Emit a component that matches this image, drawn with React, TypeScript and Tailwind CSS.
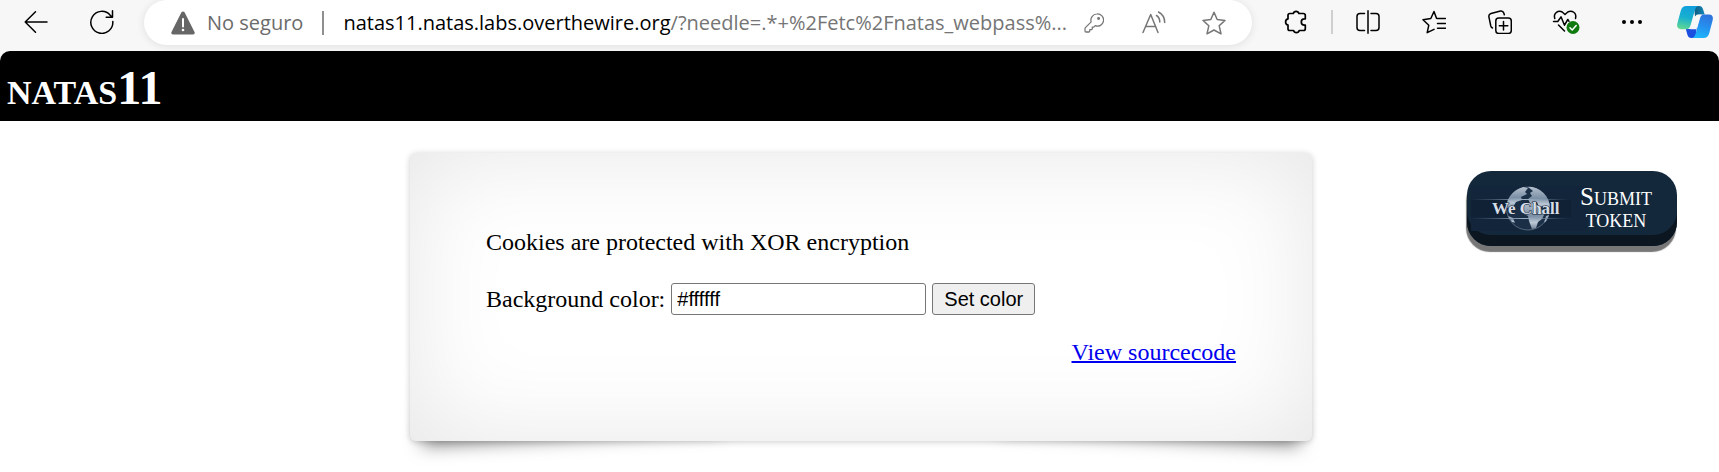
import type { ReactNode } from "react";

type IconProps = { children: ReactNode; className?: string; width?: number };

function Icon({ children, className = "size-6", width = 1.5 }: IconProps) {
  return (
    <svg
      viewBox="0 0 24 24"
      className={className}
      fill="none"
      stroke="currentColor"
      strokeWidth={width}
      strokeLinecap="round"
      strokeLinejoin="round"
      aria-hidden="true"
    >
      {children}
    </svg>
  );
}

function ToolButton({ label, children }: { label: string; children: ReactNode }) {
  return (
    <button type="button" aria-label={label} className="flex h-11 w-12 shrink-0 items-center justify-center">
      {children}
    </button>
  );
}

function CopilotLogo() {
  return (
    <svg viewBox="0 0 36 32" className="h-8 w-9" aria-hidden="true">
      <defs>
        <linearGradient id="cp-left" x1="0.500" y1="0" x2="0.300" y2="1">
          <stop offset="0" stopColor="#109fdd" />
          <stop offset="0.500" stopColor="#18b0cf" />
          <stop offset="1" stopColor="#5fd893" />
        </linearGradient>
        <linearGradient id="cp-right" x1="0.700" y1="0" x2="0.400" y2="1">
          <stop offset="0" stopColor="#2f72dc" />
          <stop offset="0.500" stopColor="#2590ef" />
          <stop offset="1" stopColor="#1fb6fb" />
        </linearGradient>
        <linearGradient id="cp-top" x1="0" y1="0.500" x2="1" y2="0.500">
          <stop offset="0" stopColor="#0e5b7c" />
          <stop offset="1" stopColor="#1286b8" />
        </linearGradient>
      </defs>
      <path d="M17 0h5c2.500 0 3.600 1.500 4.300 4l1.400 4.500H23c-2.500 0-4 .5-5 2z" fill="url(#cp-top)" />
      <path d="M19 32h-4.500c-2.700 0-3.600-1.500-4.300-4L8.800 23h3.700c2.500 0 3.800-.5 4.800-2.500l2.200 1z" fill="#1c4fe0" />
      <path d="M9.500 0H22c-2.300 0-3.400 1.800-4.200 4.500L13.600 19c-.9 3-1.900 4.200-4.600 4.200H4c-3.500 0-4.500-2.700-3.600-6L3.700 5C4.700 1.500 6.200 0 9.500 0z" fill="url(#cp-left)" />
      <path d="M27 8.500h5c3.500 0 4.500 2.700 3.600 6L32.300 27c-1 3.500-2.500 5-5.800 5H14.500c2.300 0 3.400-1.800 4.200-4.500L22.800 13c.8-3 1.700-4.500 4.200-4.500z" fill="url(#cp-right)" />
      <path d="M19.500 8.800h5c-1.200.9-1.700 2.300-2.200 4.200l-3 10.200h-6c1.300-.8 1.900-2.200 2.400-4.200z" fill="#f7f7f7" />
    </svg>
  );
}

function BrowserBar() {
  return (
    <header className="flex h-[51px] items-start overflow-hidden bg-[#f7f7f7] pr-1.5 pl-3 font-['Open_Sans','Noto_Sans',sans-serif] text-black">
      <div className="flex gap-[18px] pr-[18px]">
        <ToolButton label="Atrás">
          <Icon>
            <path d="M23 12H1.200M11.500 1.700L1.200 12l10.300 10.300" />
          </Icon>
        </ToolButton>
        <ToolButton label="Actualizar">
          <Icon>
            <path d="M22.800 11.500A11 11 0 1 1 20.200 5.200L22.300 7.200M22.500 .8v6.500h-6.300" />
          </Icon>
        </ToolButton>
      </div>

      <div className="flex h-[45px] min-w-0 flex-1 items-center rounded-full bg-white pr-3.5 pl-[27px] shadow-[0_1px_8px_rgba(0,0,0,0.1)]">
        <svg viewBox="0 0 24 24" className="size-6 shrink-0" aria-hidden="true">
          <path d="M10.300 1.500a2 2 0 0 1 3.400 0L23.500 21a1.700 1.700 0 0 1-1.500 2.500H2A1.700 1.700 0 0 1 .5 21z" fill="#666" />
          <path d="M12 8v7.500" stroke="#fff" strokeWidth="2" strokeLinecap="round" />
          <circle cx="12" cy="19" r="1.300" fill="#fff" />
        </svg>
        <span className="ml-3 shrink-0 text-[20px] leading-6 text-[#6b6b6b]">No seguro</span>
        <span className="mx-[19px] h-6 w-0.5 shrink-0 bg-[#8f8f8f]" />
        <span className="min-w-0 flex-1 whitespace-nowrap text-[20px] leading-6 text-[#757575]">
          <span className="text-black">natas11.natas.labs.overthewire.org</span>
          /?needle=.*+%2Fetc%2Fnatas_webpass%...
        </span>
        <div className="flex gap-3 text-[#767676]">
          <ToolButton label="Contraseñas">
            <Icon className="size-5">
              <path d="M15.500 1.200a7.300 7.300 0 0 0-6.900 9.500L1.700 17.600a2 2 0 0 0-.5 1.300v2.600c0 .8.500 1.300 1.300 1.300h3.200c.7 0 1.200-.5 1.200-1.200v-1.500h1.800c.7 0 1.200-.5 1.200-1.200v-2h1.800l1.700-1.700a7.300 7.300 0 1 0 2.100-14z" />
              <circle cx="17.500" cy="6.500" r="1" fill="currentColor" />
            </Icon>
          </ToolButton>
          <ToolButton label="Leer en voz alta">
            <Icon>
              <path d="M1 21.500L8.700 3.500l7.300 18M3.800 15.500h10M14.500 4.500c2 1.300 3.300 3.800 3.300 6.500M16.500 1c3.800 2 6.200 6 6.200 10.500" />
            </Icon>
          </ToolButton>
          <ToolButton label="Agregar a favoritos">
            <Icon>
              <path d="M12 1.200l3.200 7.300 7.800.9-5.800 5.400 1.800 8L12 19l-7 3.800 1.800-8L1 9.400l7.800-.9z" />
            </Icon>
          </ToolButton>
        </div>
      </div>

      <div className="flex shrink-0 items-center gap-[18px] pl-5">
        <div className="flex items-center gap-[11px]">
          <ToolButton label="Extensiones">
            <Icon width={1.7}>
              <path d="M5.800 3.500h3.500a2.900 2.900 0 0 1 5.600 0h4.600a1.800 1.800 0 0 1 1.800 1.800v3.500h-.8a3.200 3.200 0 0 0 0 6.400h.8v3.500a1.800 1.800 0 0 1-1.800 1.800h-4.300a2.900 2.900 0 0 1-5.600 0H5.800A1.800 1.800 0 0 1 4 18.700v-3.600a3.200 3.200 0 0 1 0-6.200V5.300a1.800 1.800 0 0 1 1.800-1.800z" />
            </Icon>
          </ToolButton>
          <span className="h-6 w-0.5 bg-[#cfcfcf]" />
          <ToolButton label="Pantalla dividida">
            <Icon>
              <path d="M12 .8v22.400M8.500 3.500H4a3 3 0 0 0-3 3v11a3 3 0 0 0 3 3h4.500M15 3.500h5a3 3 0 0 1 3 3v11a3 3 0 0 1-3 3h-5" />
            </Icon>
          </ToolButton>
        </div>
        <ToolButton label="Favoritos">
          <Icon>
            <path d="M14.500 8.300L12 1.500 8.800 8.500 1 9.800l5.800 5.400-1.600 7.500 6.800-3.300M15 8.500h8.500M15.500 13.500h8M15.500 18.200h8" />
          </Icon>
        </ToolButton>
        <ToolButton label="Colecciones">
          <Icon>
            <rect x="7.800" y="8" width="15.500" height="15.500" rx="3" />
            <path d="M15.500 11.500v8.500M11.300 15.800h8.500M4.500 18a3 3 0 0 1-1.700-2L.9 6.800A3 3 0 0 1 3 3.500L12.500 1a3 3 0 0 1 3.300 2l.5 1.700" />
          </Icon>
        </ToolButton>
        <ToolButton label="Elementos esenciales del explorador">
          <svg viewBox="0 0 28 26" className="h-[26px] w-7" fill="none" stroke="currentColor" strokeWidth="1.500" strokeLinecap="round" strokeLinejoin="round" aria-hidden="true">
            <path d="M2.800 9.500C1 4 6.500.5 10.500 3.200L13 5.500l2.500-2.300C20 .5 25 4 23.500 9.500M1.500 12.500h4.300L9 7.800l3.500 8.400 3.300-5.700 1.200 1.800M6.500 16l6 6" />
            <circle cx="21" cy="18.500" r="6.500" fill="#0f7b0f" stroke="none" />
            <path d="M18 18.800l2.200 2.200 4-4.500" stroke="#fff" />
          </svg>
        </ToolButton>
        <ToolButton label="Configuración y más">
          <svg viewBox="0 0 24 24" className="size-6" fill="currentColor" aria-hidden="true">
            <circle cx="4" cy="12" r="2" />
            <circle cx="12" cy="12" r="2" />
            <circle cx="20" cy="12" r="2" />
          </svg>
        </ToolButton>
        <button type="button" aria-label="Copilot" className="ml-[3px] shrink-0">
          <CopilotLogo />
        </button>
      </div>
    </header>
  );
}

function WeChallLogo() {
  return (
    <svg viewBox="0 0 116 45" className="h-[45px] w-[116px] shrink-0" role="img" aria-label="WeChall">
      <defs>
        <linearGradient id="wc-line">
          <stop offset="0" stopColor="#5c7693" stopOpacity="0" />
          <stop offset="0.500" stopColor="#9db0c4" />
          <stop offset="0.900" stopColor="#5c7693" stopOpacity="0" />
        </linearGradient>
        <linearGradient id="wc-land" x1="0" y1="0" x2="0" y2="1">
          <stop offset="0" stopColor="#b4c0cd" />
          <stop offset="0.500" stopColor="#7b8fa5" />
          <stop offset="0.750" stopColor="#bcc8d5" />
          <stop offset="1" stopColor="#74869a" />
        </linearGradient>
        <clipPath id="wc-clip">
          <circle cx="57" cy="22.500" r="22" />
        </clipPath>
      </defs>
      <rect width="116" height="45" fill="#12253a" />
      <rect y="14" width="100" height="17" fill="#102136" />
      <circle cx="57" cy="22.500" r="21.500" fill="#1b3047" stroke="#8fa2b6" strokeWidth="1" strokeOpacity="0.500" />
      <g clipPath="url(#wc-clip)" fill="url(#wc-land)">
        <path d="M36 17c2-8 8-14 16-16l5 1-3 4 2 2-6 3 1 3-6 2-3 5-6 1z" />
        <path d="M57 1c8-1 15 2 19 8l4 10-4 5-3-4-5 1-2-5-7 1-2-4 4-3-2-3 3-2z" />
        <path d="M52 19l9-2 8 3 2 5 3 2-3 6-4 3-2 6-4 1-3-8-1-5-6-3-2-4z" />
        <path d="M75 30l4-1-3 6-3 2z" />
        <path d="M37 30l5 2 2 5-3-1z" />
      </g>
      <rect y="13" width="108" height="1" fill="url(#wc-line)" />
      <rect y="32" width="108" height="1" fill="url(#wc-line)" />
      <text x="21" y="28" fontSize="17" fontWeight="700" fill="#d8dee6" stroke="#102136" strokeWidth="1" paintOrder="stroke" className="font-['Liberation_Serif',serif]">
        We Chall
      </text>
    </svg>
  );
}

export default function App() {
  return (
    <div className="bg-white font-['Liberation_Serif',serif] text-[24px] leading-[27px] text-black">
      <BrowserBar />
      <div className="bg-[#f7f7f7]">
        <h1 className="flex h-[70px] items-center rounded-t-[10px] bg-black pt-1 pl-[7px] text-[48px] leading-[54px] font-bold text-white [font-variant:small-caps]">
          natas11
        </h1>
      </div>

      <main className="isolate grid grid-cols-[1fr_minmax(0,902px)_1fr] items-start pt-8 pb-8 pl-[3px]">
        <section className="relative col-start-2 rounded-md bg-white px-[76px] pt-[76px] pb-[75px] shadow-[0_1px_6px_rgba(0,0,0,0.2),inset_0_0_100px_rgba(0,0,0,0.1)] before:absolute before:bottom-[18px] before:left-5 before:-z-10 before:h-[55%] before:w-1/2 before:max-w-[300px] before:-skew-x-8 before:-rotate-3 before:shadow-[0_14px_18px_rgba(0,0,0,0.5)] before:content-[''] after:absolute after:right-5 after:bottom-[18px] after:-z-10 after:h-[55%] after:w-1/2 after:max-w-[300px] after:skew-x-8 after:rotate-3 after:shadow-[0_14px_18px_rgba(0,0,0,0.5)] after:content-['']">
          <p>Cookies are protected with XOR encryption</p>
          <form className="mt-[27px] flex h-8 items-center gap-1.5" onSubmit={(e) => e.preventDefault()}>
            <label htmlFor="bgcolor">Background color:</label>
            <input
              id="bgcolor"
              name="bgcolor"
              defaultValue="#ffffff"
              className="h-8 w-[255px] rounded-[3px] border border-[#767676] bg-white px-[5px] font-['Liberation_Sans',sans-serif] text-[20px] leading-6"
            />
            <button
              type="submit"
              className="h-8 rounded-[3px] border border-[#767676] bg-[#efefef] px-[11px] font-['Liberation_Sans',sans-serif] text-[20px] leading-6"
            >
              Set color
            </button>
          </form>
          <div className="mt-6 text-right">
            <a href="#source" className="text-[#0000ee] underline decoration-2">
              View sourcecode
            </a>
          </div>
        </section>

        <a
          href="#submit"
          className="mt-[18px] mr-[42px] flex h-[75px] w-[210px] items-start justify-self-end rounded-[24px] bg-[#14283c] pt-[15px] pr-5 pl-1 text-white shadow-[-1px_6px_1px_#777,inset_0_-11px_0_#0b1621]"
        >
          <WeChallLogo />
          <span className="-mr-1 -ml-4 flex-1 text-center text-[25px] leading-[22px] [font-variant:small-caps]">
            Submit token
          </span>
        </a>
      </main>
    </div>
  );
}
